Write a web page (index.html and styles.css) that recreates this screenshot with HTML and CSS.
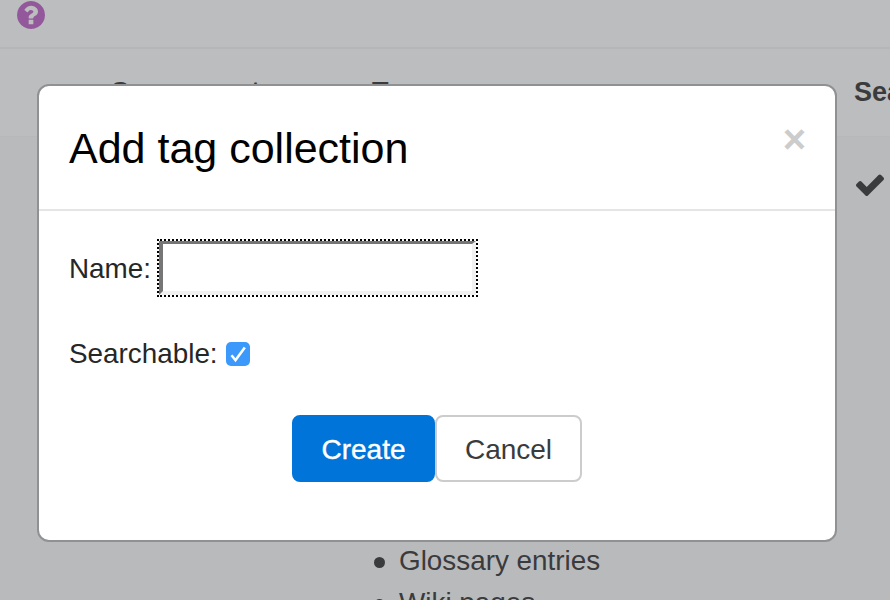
FILE: index.html
```html
<!DOCTYPE html>
<html lang="en">
<head>
<meta charset="utf-8">
<title>Add tag collection</title>
<link rel="stylesheet" href="styles.css">
</head>
<body>
<div class="page">
  <div class="topbar">
    <svg class="help" viewBox="128 128 1536 1536" aria-hidden="true"><path d="M1024 1376v-192q0-14-9-23t-23-9h-192q-14 0-23 9t-9 23v192q0 14 9 23t23 9h192q14 0 23-9t9-23zm256-672q0-88-55.5-163t-138.5-116-170-41q-243 0-371 213-15 24 8 42l132 100q7 6 19 6 16 0 25-12 53-68 86-92 34-24 86-24 48 0 85.5 26t37.5 59q0 38-20 61t-68 45q-63 28-115.5 86.5t-52.5 125.5v36q0 14 9 23t23 9h192q14 0 23-9t9-23q0-19 21.5-49.5t54.5-50.5q32-18 49-28.5t46-35 44.5-48 28-60.5 12.5-81zm384 192q0 209-103 385.5t-279.5 279.5-385.5 103-385.5-103-279.5-279.5-103-385.5 103-385.5 279.5-279.5 385.5-103 385.5 103 279.5 279.5 103 385.5z"/></svg>
  </div>
  <div class="table">
    <div class="row head">
      <div class="cell c-name"></div>
      <div class="cell c-comp">Component</div>
      <div class="cell c-areas">Tag areas</div>
      <div class="cell c-search">Searchable</div>
    </div>
    <div class="row body">
      <div class="cell c-name"></div>
      <div class="cell c-comp"></div>
      <div class="cell c-areas">
        <ul class="areas">
          <li>Glossary entries</li>
          <li>Wiki pages</li>
        </ul>
      </div>
      <div class="cell c-search">
        <svg class="check" viewBox="121 306 1550 1216" aria-hidden="true"><path d="M1671 566q0 40-28 68l-724 724-136 136q-28 28-68 28t-68-28l-136-136-362-362q-28-28-28-68t28-68l136-136q28-28 68-28t68 28l294 295 656-657q28-28 68-28t68 28l136 136q28 28 28 68z"/></svg>
      </div>
    </div>
  </div>
</div>

<div class="modal" role="dialog">
  <div class="modal-head">
    <h3 class="modal-title">Add tag collection</h3>
    <span class="close">×</span>
  </div>
  <form class="modal-body">
    <div class="field name-field">
      <label class="label" for="name">Name:</label>
      <input class="text-input" id="name" type="text">
    </div>
    <div class="field check-field">
      <span class="label">Searchable:</span>
      <span class="checkbox">
        <svg viewBox="0 0 24 24" aria-hidden="true"><path d="M5.5 13.2l4 5L18.8 5.5"/></svg>
      </span>
    </div>
    <div class="actions">
      <button class="btn primary" type="button">Create</button>
      <button class="btn" type="button">Cancel</button>
    </div>
  </form>
</div>
</body>
</html>
```

FILE: styles.css
```css
html, body {
  margin: 0;
  height: 100%;
  overflow: hidden;
}
body {
  position: relative;
  background: #bcbdbf;
  color: #3a3b3d;
  font-family: "Liberation Sans", Arial, sans-serif;
  font-size: 27.85px;
}
.topbar {
  height: 47px;
  padding-left: 17px;
  border-bottom: 2px solid #b5b6b8;
  box-sizing: content-box;
}
.help {
  display: block;
  width: 28px;
  height: 28px;
  padding-top: 1px;
  fill: #93589b;
}
.row {
  display: flex;
}
.head {
  height: 86px;
  padding-bottom: 1px;
  box-sizing: content-box;
  align-items: center;
  font-weight: 700;
  font-size: 27px;
  white-space: nowrap;
  border-bottom: 1px solid #b7b8ba;
  background: #bcbdbf;
}
.body {
  background: #b9babc;
}
.table {
  width: 1100px;
}
.c-name {
  width: 110px;
}
.c-comp {
  width: 262px;
}
.c-areas {
  width: 482px;
}
.c-search {
  width: 240px;
}
.body .c-search {
  padding: 37px 0 0 2px;
}
.check {
  display: block;
  width: 28px;
  height: 22px;
  fill: #3a3b3d;
}
.body .c-areas {
  padding-top: 403px;
}
.areas {
  margin: 0;
  padding: 0 0 0 2px;
  line-height: 42px;
  list-style: none;
}
.areas li {
  display: flex;
  align-items: center;
  gap: 14px;
}
.areas li::before {
  content: "";
  width: 11px;
  height: 11px;
  margin-top: 2px;
  border-radius: 50%;
  background: #3a3b3d;
}
.modal {
  position: absolute;
  left: 37px;
  top: 84px;
  width: 800px;
  height: 458px;
  box-sizing: border-box;
  background: #fff;
  border: 2px solid #909193;
  border-radius: 12px;
  color: #262626;
}
.modal-head {
  display: flex;
  justify-content: space-between;
  align-items: flex-start;
  height: 125px;
  box-sizing: border-box;
  padding: 0 29px 0 30px;
  border-bottom: 2px solid #e5e5e5;
}
.modal-title {
  margin: 34px 0 0;
  font-size: 43px;
  font-weight: 400;
  line-height: 56px;
  color: #000;
}
.close {
  margin-top: 30px;
  font-size: 40px;
  line-height: 46px;
  font-weight: 700;
  color: #cccccc;
}
.modal-body {
  display: block;
  margin: 0;
  padding: 28px 30px 0;
}
.field {
  display: flex;
  align-items: center;
  gap: 8px;
  height: 58px;
  line-height: 40px;
}
.name-field .label {
  padding-top: 2px;
}
.check-field {
  margin-top: 43px;
  height: 28px;
}
.text-input {
  display: block;
  width: 317px;
  height: 54px;
  box-sizing: border-box;
  margin: 0;
  padding: 0;
  background: #fff;
  border-style: solid;
  border-width: 3px 4px 4px 4px;
  border-color: #767676 #f1f1f1 #f1f1f1 #767676;
  outline: 2px dotted #000;
  outline-offset: 0;
}
.checkbox {
  display: block;
  width: 24px;
  height: 24px;
  background: #3b99fc;
  border-radius: 5px;
}
.checkbox svg {
  display: block;
  width: 24px;
  height: 24px;
  fill: none;
  stroke: #fff;
  stroke-width: 2.6;
}
.actions {
  display: flex;
  justify-content: center;
  margin-top: 47px;
}
.btn {
  width: 147px;
  height: 67px;
  box-sizing: border-box;
  margin: 0;
  padding: 2px 0 0;
  background: #fff;
  border: 2px solid #cccccc;
  border-radius: 8px;
  color: #3a3b3d;
  font: 400 28px "Liberation Sans", Arial, sans-serif;
}
.btn.primary {
  width: 143px;
  background: #0074d9;
  border-color: #0074d9;
  color: #fff;
  -webkit-text-stroke: 0.4px #fff;
}
```
